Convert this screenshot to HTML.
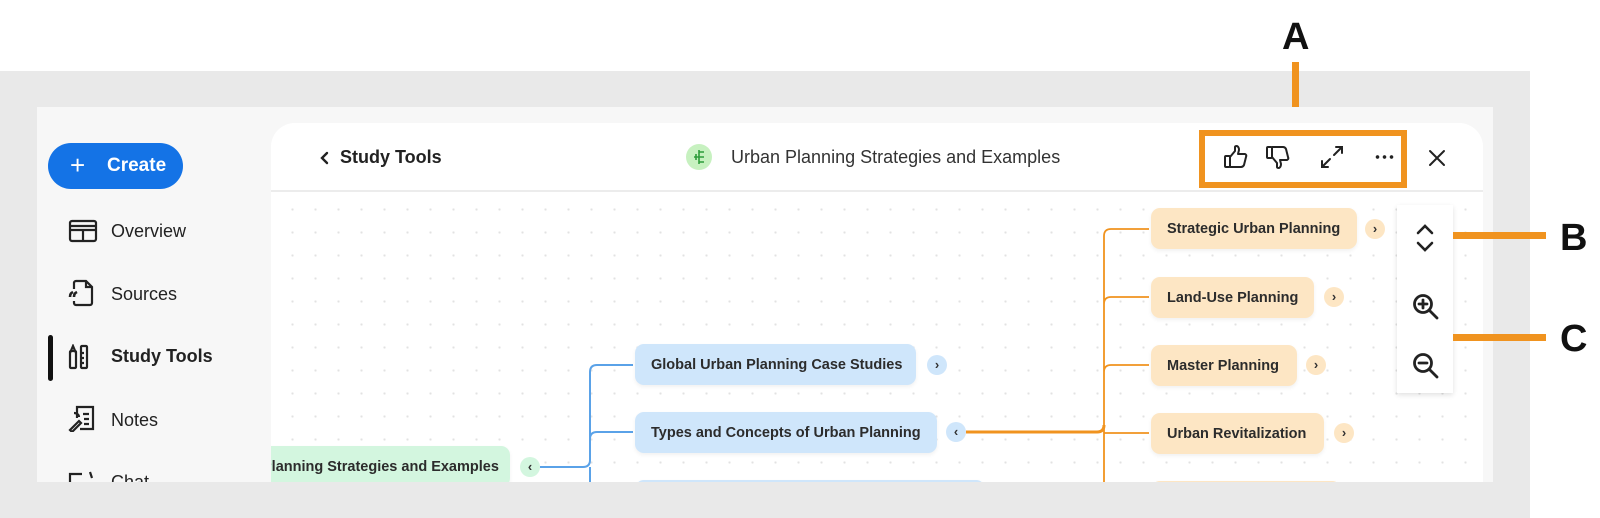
<!DOCTYPE html>
<html><head><meta charset="utf-8"><style>
*{margin:0;padding:0;box-sizing:border-box}
body{width:1600px;height:518px;background:#fff;position:relative;overflow:hidden;font-family:"Liberation Sans",sans-serif;color:#222}
.abs{position:absolute}
.gray{left:0;top:71px;width:1530px;height:447px;background:#e9e9e9}
.app{left:37px;top:107px;width:1456px;height:375px;background:#f7f7f7;overflow:hidden}
.card{left:234px;top:16px;width:1212px;height:380px;background:#fff;border-radius:24px 24px 0 0;overflow:hidden;
background-image:radial-gradient(circle,#e2e2e2 1px,transparent 1.3px);background-size:23px 23px;background-position:10px 6px}
.hdr{left:0;top:0;width:1212px;height:69px;background:#fff;border-bottom:2px solid #ececec}
.create{left:11px;top:36px;width:135px;height:46px;background:#1473e6;border-radius:23px;color:#fff;font-weight:bold;font-size:19px;line-height:46px}
.nav{left:74px;font-size:18px;color:#222}
.node{position:absolute;border-radius:9px;font-size:14.5px;font-weight:bold;color:#2c2c2c;line-height:42px;padding-left:16px;height:41px;white-space:nowrap;box-shadow:0 2px 4px rgba(0,0,0,.06)}
.b{background:#cfe6fb}.o{background:#fde6c4}.g{background:#d3f6df}
.circ{position:absolute;width:20px;height:20px;border-radius:10px;font-size:13px;font-weight:bold;line-height:19px;text-align:center;color:#333}
.lbl{font-size:38px;font-weight:bold;color:#111}
.bar{background:#f0931f}
</style></head><body>
<div class="abs gray"></div>
<div class="abs lbl" style="left:1282px;top:16px">A</div>
<div class="abs bar" style="left:1292px;top:62px;width:7px;height:70px"></div>
<div class="abs app">
  <div class="abs create"><span style="position:absolute;left:22px;font-size:26px;font-weight:normal;top:-1px">+</span><span style="position:absolute;left:59px">Create</span></div>
  <svg class="abs" style="left:31px;top:112px" width="30" height="24" viewBox="0 0 30 24" fill="none" stroke="#222" stroke-width="2.2"><rect x="2" y="2" width="26" height="20" rx="2"/><path d="M2 11H28M15 11V22M2 7H28" /></svg>
  <div class="abs nav" style="top:114px">Overview</div>
  <svg class="abs" style="left:31px;top:172px" width="26" height="28" viewBox="0 0 26 28" fill="none" stroke="#222" stroke-width="2.2"><path d="M6 10V4a2 2 0 0 1 2-2h10l6 6v16a2 2 0 0 1-2 2H8a2 2 0 0 1-2-2v-2M18 2v6h6"/><path d="M2 18c0-3 1-4 3-5M6 18c0-3 1-4 3-5" stroke-width="2.6"/></svg>
  <div class="abs nav" style="top:177px">Sources</div>
  <div class="abs" style="left:11px;top:228px;width:5px;height:46px;background:#111;border-radius:3px"></div>
  <svg class="abs" style="left:31px;top:237px" width="22" height="26" viewBox="0 0 22 26" fill="none" stroke="#222" stroke-width="2.2"><rect x="2" y="7" width="6" height="17" rx="1"/><path d="M2 9L5 2L8 9"/><rect x="13" y="2" width="6" height="22" rx="1"/><path d="M13 9h3M13 14h3M13 19h3"/></svg>
  <div class="abs nav" style="top:239px;font-weight:bold">Study Tools</div>
  <svg class="abs" style="left:31px;top:297px" width="28" height="28" viewBox="0 0 28 28" fill="none" stroke="#222" stroke-width="2.2"><path d="M9 14V3h16v22H12M15 10h6M16 15h5M16 20h5"/><path d="M2 26l9-9 2 2-9 9zM6 9c3 0 5 2 5 4"/></svg>
  <div class="abs nav" style="top:303px">Notes</div>
  <svg class="abs" style="left:31px;top:362px" width="28" height="20" viewBox="0 0 28 20" fill="none" stroke="#222" stroke-width="2.2"><path d="M2 16V5h12M22 3l2 6"/></svg>
  <div class="abs nav" style="top:365px">Chat</div>

  <div class="abs card">
    <svg class="abs" style="left:0;top:0" width="1212" height="380" fill="none">
      <path d="M269 344H312Q319 344 319 337V249Q319 242 326 242H362M319 316Q319 309 326 309H362M319 344Q319 351 319 358V380" stroke="#5aa2e8" stroke-width="2"/>
      <path d="M695 309H826Q833 309 833 302" stroke="#f0931f" stroke-width="3"/>
      <path d="M878 106H840Q833 106 833 113V380M878 174H840Q833 174 833 181M878 242H840Q833 242 833 249M878 310H833" stroke="#f0931f" stroke-width="1.8"/>
    </svg>
    <div class="node g" style="left:-40px;top:323px;width:279px;overflow:hidden;padding-left:0"><span style="position:absolute;left:31px">Planning Strategies and Examples</span></div>
    <div class="circ g" style="left:249px;top:334px">‹</div>
    <div class="node b" style="left:364px;top:221px;width:281px">Global Urban Planning Case Studies</div>
    <div class="circ b" style="left:656px;top:232px">›</div>
    <div class="node b" style="left:364px;top:289px;width:302px">Types and Concepts of Urban Planning</div>
    <div class="circ b" style="left:675px;top:299px">‹</div>
    <div class="node b" style="left:364px;top:357px;width:350px"></div>
    <div class="node o" style="left:880px;top:85px;width:206px">Strategic Urban Planning</div>
    <div class="circ o" style="left:1094px;top:96px">›</div>
    <div class="node o" style="left:880px;top:154px;width:163px">Land-Use Planning</div>
    <div class="circ o" style="left:1053px;top:164px">›</div>
    <div class="node o" style="left:880px;top:222px;width:146px">Master Planning</div>
    <div class="circ o" style="left:1035px;top:232px">›</div>
    <div class="node o" style="left:880px;top:290px;width:173px">Urban Revitalization</div>
    <div class="circ o" style="left:1063px;top:300px">›</div>
    <div class="node o" style="left:880px;top:358px;width:190px"></div>

    <div class="abs" style="left:1126px;top:82px;width:56px;height:188px;background:#fff;box-shadow:0 2px 5px rgba(0,0,0,.12)">
      <svg class="abs" style="left:18px;top:18px" width="20" height="30" viewBox="0 0 20 30" fill="none" stroke="#222" stroke-width="2.6" stroke-linecap="round"><path d="M3 10L10 3L17 10M3 20L10 27L17 20"/></svg>
      <svg class="abs" style="left:15px;top:88px" width="28" height="28" viewBox="0 0 28 28" fill="none" stroke="#222" stroke-width="2.8" stroke-linecap="round"><circle cx="11" cy="11" r="8.5"/><path d="M17 17L25 25M11 7V15M7 11H15"/></svg>
      <svg class="abs" style="left:15px;top:147px" width="28" height="28" viewBox="0 0 28 28" fill="none" stroke="#222" stroke-width="2.8" stroke-linecap="round"><circle cx="11" cy="11" r="8.5"/><path d="M17 17L25 25M7 11H15"/></svg>
    </div>

    <div class="abs hdr">
      <svg class="abs" style="left:49px;top:28px" width="10" height="14" viewBox="0 0 10 14" fill="none" stroke="#222" stroke-width="2.4" stroke-linecap="round"><path d="M7 2L2 7L7 12"/></svg>
      <div class="abs" style="left:69px;top:24px;font-size:18px;font-weight:bold">Study Tools</div>
      <div class="abs" style="left:415px;top:21px;width:26px;height:26px;border-radius:13px;background:#c7f1c0"></div>
      <svg class="abs" style="left:421px;top:26px" width="14" height="16" viewBox="0 0 14 16" fill="none" stroke="#2d9d3a" stroke-width="1.6"><path d="M7 1V15M7 3H12M7 8H12M7 13H12M2 8H7M4 5V11"/></svg>
      <div class="abs" style="left:460px;top:24px;font-size:18px;color:#333">Urban Planning Strategies and Examples</div>
      <svg class="abs" style="left:1157px;top:26px" width="18" height="18" viewBox="0 0 18 18" fill="none" stroke="#222" stroke-width="2" stroke-linecap="round"><path d="M2 2L16 16M16 2L2 16"/></svg>
    </div>
  </div>
</div>
<div class="abs" style="left:1199px;top:130px;width:208px;height:58px;border:6px solid #f0931f"></div>
<svg class="abs" style="left:1223px;top:144px" width="26" height="26" viewBox="0 0 26 26" fill="none" stroke="#222" stroke-width="2" stroke-linejoin="round"><rect x="2" y="12" width="5" height="11" rx="1"/><path d="M7 13L12 7V3Q12 2 14 2Q16 3 16 6L15 10H22Q24 11 23 13L21 21Q20 23 18 23H7"/></svg>
<svg class="abs" style="left:1265px;top:144px" width="26" height="26" viewBox="0 0 26 26" fill="none" stroke="#222" stroke-width="2" stroke-linejoin="round"><rect x="2" y="3" width="5" height="11" rx="1"/><path d="M7 13L12 19V23Q12 24 14 24Q16 23 16 20L15 16H22Q24 15 23 13L21 5Q20 3 18 3H7"/></svg>
<svg class="abs" style="left:1320px;top:145px" width="24" height="24" viewBox="0 0 24 24" fill="none" stroke="#222" stroke-width="2" stroke-linecap="round"><path d="M14 10L22 2M16 2H22V8M10 14L2 22M2 16V22H8"/></svg>
<div class="abs" style="left:1374px;top:155px;width:21px;height:4px;background:radial-gradient(circle,#222 1.6px,transparent 2px) 0 0/7px 4px"></div>
<div class="abs bar" style="left:1453px;top:232px;width:93px;height:7px"></div>
<div class="abs lbl" style="left:1560px;top:217px">B</div>
<div class="abs bar" style="left:1453px;top:334px;width:93px;height:7px"></div>
<div class="abs lbl" style="left:1560px;top:318px">C</div>
</body></html>
